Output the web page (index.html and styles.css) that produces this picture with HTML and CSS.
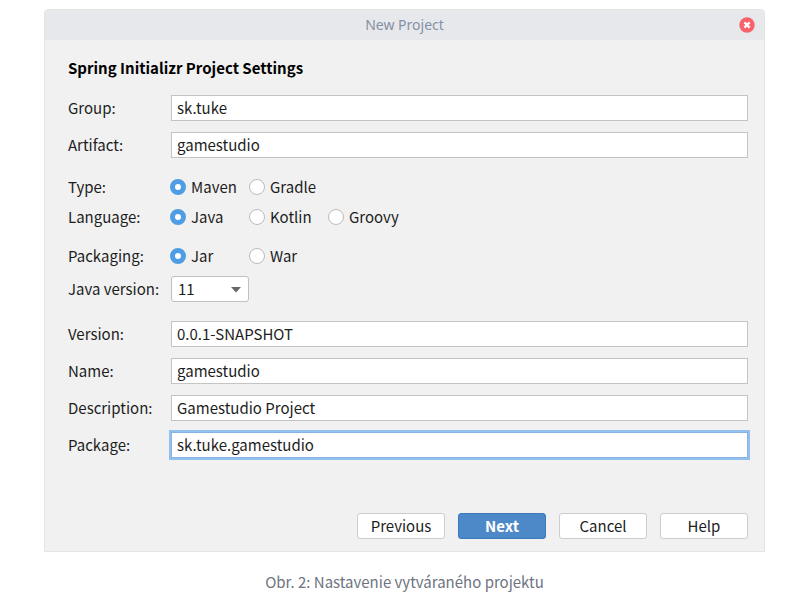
FILE: index.html
```html
<!DOCTYPE html>
<html lang="sk">
<head>
<meta charset="utf-8">
<title>New Project</title>
<link rel="stylesheet" href="styles.css">
</head>
<body>
<figure class="figure">
  <form class="dialog">
    <header class="titlebar">
      <span class="title">New Project</span>
      <button class="close" type="button" aria-label="Close">
        <svg viewBox="0 0 16 16" width="16" height="16"><circle cx="8" cy="8" r="7.7" fill="#f9616b"/><path d="M5.4 5.4l5.2 5.2M10.6 5.4l-5.2 5.2" stroke="#fff" stroke-width="2.3"/></svg>
      </button>
    </header>
    <div class="content">
      <h1 class="heading">Spring Initializr Project Settings</h1>
      <div class="fields">
        <div class="row"><label for="group">Group:</label><input class="text" id="group" type="text" value="sk.tuke"></div>
        <div class="row"><label for="artifact">Artifact:</label><input class="text" id="artifact" type="text" value="gamestudio"></div>
      </div>
      <div class="choices">
        <div class="row" role="radiogroup" aria-labelledby="type"><span id="type">Type:</span>
          <div class="options">
            <label class="option"><input type="radio" name="type" checked>Maven</label>
            <label class="option"><input type="radio" name="type">Gradle</label>
          </div>
        </div>
        <div class="row" role="radiogroup" aria-labelledby="language"><span id="language">Language:</span>
          <div class="options">
            <label class="option"><input type="radio" name="language" checked>Java</label>
            <label class="option"><input type="radio" name="language">Kotlin</label>
            <label class="option"><input type="radio" name="language">Groovy</label>
          </div>
        </div>
      </div>
      <div class="packaging">
        <div class="row" role="radiogroup" aria-labelledby="packaging"><span id="packaging">Packaging:</span>
          <div class="options">
            <label class="option"><input type="radio" name="packaging" checked>Jar</label>
            <label class="option"><input type="radio" name="packaging">War</label>
          </div>
        </div>
        <div class="row"><label for="java">Java version:</label>
          <div class="select">
            <select id="java"><option>11</option></select>
            <svg class="arrow" viewBox="0 0 10 6" width="10" height="6"><path d="M0 0h10L5 5.5z" fill="#686868"/></svg>
          </div>
        </div>
      </div>
      <div class="fields">
        <div class="row"><label for="version">Version:</label><input class="text" id="version" type="text" value="0.0.1-SNAPSHOT"></div>
        <div class="row"><label for="name">Name:</label><input class="text" id="name" type="text" value="gamestudio"></div>
        <div class="row"><label for="description">Description:</label><input class="text" id="description" type="text" value="Gamestudio Project"></div>
        <div class="row"><label for="package">Package:</label><input class="text active" id="package" type="text" value="sk.tuke.gamestudio"></div>
      </div>
      <div class="actions">
        <button class="button" type="button">Previous</button>
        <button class="button primary" type="button">Next</button>
        <button class="button" type="button">Cancel</button>
        <button class="button" type="button">Help</button>
      </div>
    </div>
  </form>
  <figcaption class="caption">Obr. 2: Nastavenie vytváraného projektu</figcaption>
</figure>
</body>
</html>
```
FILE: styles.css
```css
* {
  box-sizing: border-box;
}

body {
  margin: 0;
  background: #fff;
  color: #1d1d1d;
  font: 15px/24px "Noto Sans CJK SC", "Noto Sans", sans-serif;
}

input,
select,
button {
  margin: 0;
  color: inherit;
  font: inherit;
}

.figure {
  margin: 9px 37px 0 44px;
}

.dialog {
  border: 1px solid #e4e4e5;
  border-radius: 4px 4px 0 0;
  background: #f1f1f1;
}

.titlebar {
  display: grid;
  grid-template-columns: 1fr auto 1fr;
  align-items: center;
  height: 30px;
  padding: 0 9px;
  border-radius: 3px 3px 0 0;
  background: #e6e8ec;
}

.title {
  grid-column: 2;
  color: #8690a5;
  font: 14px/24px "Noto Sans", sans-serif;
}

.close {
  justify-self: end;
  display: flex;
  padding: 0;
  border: 0;
  background: none;
}

.content {
  padding: 16px 16px 12px 23px;
}

.heading {
  margin: 0 0 15px;
  color: #000;
  font-size: 15px;
  font-weight: 700;
  line-height: 24px;
}

.row {
  display: grid;
  grid-template-columns: 103px 1fr;
  align-items: center;
}

.fields {
  display: grid;
  gap: 11px;
}

.text {
  width: 100%;
  height: 26px;
  padding: 0 5px 2px;
  border: 1px solid #c4c4c4;
  border-radius: 0;
  background: #fff;
  line-height: 22px;
}

.active {
  border-color: #86b3e4;
  outline: 2px solid #94c0f0;
}

.choices {
  display: grid;
  gap: 6px;
  margin: 17px 0 15px;
}

.options {
  display: flex;
  margin-left: -1px;
}

.option {
  display: flex;
  align-items: center;
  gap: 5px;
  width: 79px;
}

.option input {
  appearance: none;
  width: 16px;
  height: 16px;
  border: 1px solid #bcbcbc;
  border-radius: 50%;
  background: #fff;
}

.option input:checked {
  border: 5px solid #4f9de4;
}

.packaging {
  display: grid;
  gap: 8px;
  margin-bottom: 19px;
}

.select {
  position: relative;
  width: 78px;
}

.select select {
  display: block;
  appearance: none;
  width: 100%;
  height: 26px;
  padding: 0 6px;
  border: 1px solid #c0c0c0;
  border-radius: 3px;
  background: #fff;
  line-height: 24px;
}

.arrow {
  position: absolute;
  top: 11px;
  right: 8px;
  pointer-events: none;
}

.actions {
  display: flex;
  justify-content: flex-end;
  gap: 13px;
  margin-top: 55px;
}

.button {
  width: 88px;
  height: 26px;
  padding: 0;
  border: 1px solid #cdcdcd;
  border-radius: 3px;
  background: #fff;
  line-height: 24px;
}

.primary {
  border-color: #3f77bd;
  background: #4d89c9;
  color: #fff;
  font-weight: 700;
}

.caption {
  margin-top: 18px;
  color: #6d7480;
  font-size: 15px;
  line-height: 24px;
  text-align: center;
}
```
